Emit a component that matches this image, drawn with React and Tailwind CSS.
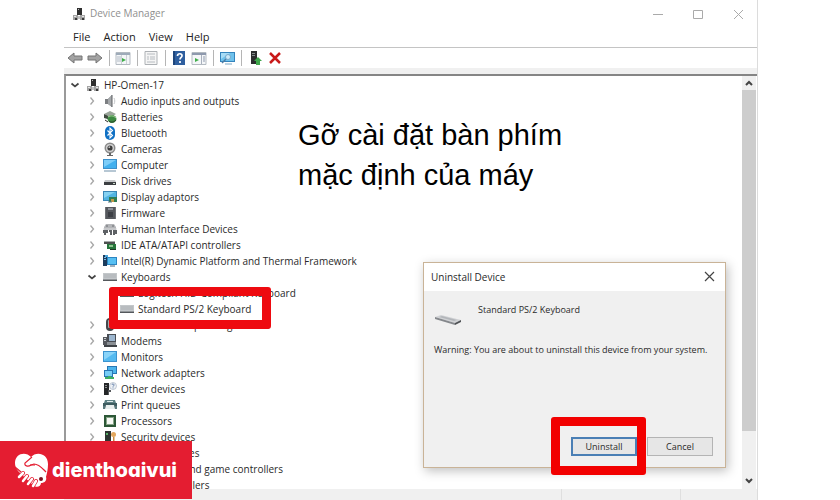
const treeItems = [
  { icon: 'root', label: 'HP-Omen-17', level: 0, open: true },
  { icon: 'audio', label: 'Audio inputs and outputs', level: 1 },
  { icon: 'battery', label: 'Batteries', level: 1 },
  { icon: 'bluetooth', label: 'Bluetooth', level: 1 },
  { icon: 'camera', label: 'Cameras', level: 1 },
  { icon: 'computer', label: 'Computer', level: 1 },
  { icon: 'disk', label: 'Disk drives', level: 1 },
  { icon: 'display', label: 'Display adaptors', level: 1 },
  { icon: 'firmware', label: 'Firmware', level: 1 },
  { icon: 'hid', label: 'Human Interface Devices', level: 1 },
  { icon: 'ide', label: 'IDE ATA/ATAPI controllers', level: 1 },
  { icon: 'intel', label: 'Intel(R) Dynamic Platform and Thermal Framework', level: 1 },
  { icon: 'keyboard', label: 'Keyboards', level: 1, open: true },
  { icon: 'keyboard', label: 'Logitech HID-Compliant Keyboard', level: 2 },
  { icon: 'keyboard', label: 'Standard PS/2 Keyboard', level: 2, marked: true },
  { icon: 'mouse', label: 'Mice and other pointing devices', level: 1 },
  { icon: 'modem', label: 'Modems', level: 1 },
  { icon: 'monitor', label: 'Monitors', level: 1 },
  { icon: 'network', label: 'Network adapters', level: 1 },
  { icon: 'other', label: 'Other devices', level: 1 },
  { icon: 'printer', label: 'Print queues', level: 1 },
  { icon: 'cpu', label: 'Processors', level: 1 },
  { icon: 'security', label: 'Security devices', level: 1 },
  { icon: 'other', label: 'Software devices', level: 1 },
  { icon: 'audio', label: 'Sound, video and game controllers', level: 1 },
  { icon: 'disk', label: 'Storage controllers', level: 1 },
];

const indents = ['pl-px', 'pl-[18px]', 'pl-[35px]'];

const glyphs = {
  root: (
    <>
      <path d="M5 1h5v7H5z" fill="#2f2f2f" />
      <path d="M6 2h1v1H6z" fill="#b8b8b8" />
      <path d="M1 8h5v5H1zM8 8h5v5H8z" fill="#a3a3a3" />
      <path d="M6 9h2v3H6z" fill="#c4c4c4" />
      <path d="M2 9h2v1H2zM10 9h2v1h-2z" fill="#e6e6e6" />
      <path d="M3 11h2v2H3zM10 11h2v2h-2z" fill="#3a3a3a" />
    </>
  ),
  audio: (
    <>
      <path d="M2 5h3l4-4v12L5 10H2z" fill="#7c7f82" />
      <path d="M5 5l4-4v12l-4-3z" fill="#a4a7aa" />
      <path d="M9 1v12" stroke="#5c5f62" />
      <path d="M11 4c1 2 1 4 0 6" fill="none" stroke="#c4c7ca" />
    </>
  ),
  battery: (
    <>
      <path d="M1 4l6-3 6 3-5 3z" fill="#9aa59a" />
      <path d="M1 4l7 3v3L1 8z" fill="#3f4a40" />
      <ellipse cx="9" cy="9" rx="4.5" ry="4" fill="#3d8a43" />
      <path d="M5 7c3-2 6-1 8 1" fill="none" stroke="#a8d49a" />
      <path d="M6 11c2 2 5 1 7-1" fill="none" stroke="#23402a" />
      <path d="M2 10l3 2" stroke="#2c2c2c" />
    </>
  ),
  bluetooth: (
    <>
      <rect x="2" y="0" width="10" height="14" rx="5" fill="#0f70c4" />
      <path d="M4.5 4.5l5 5L7 12V2l2.500 2.500-5 5" fill="none" stroke="#fff" strokeWidth="1.1" />
    </>
  ),
  camera: (
    <>
      <circle cx="7" cy="6" r="5.500" fill="#8a8a8a" />
      <circle cx="7" cy="6" r="4" fill="#d2d2d2" />
      <circle cx="7" cy="6" r="2.600" fill="#3c3c3c" />
      <circle cx="6.300" cy="5.200" r=".9" fill="#b9b9b9" />
      <path d="M6 11h2v2h2v1H4v-1h2z" fill="#666" />
    </>
  ),
  computer: (
    <>
      <path d="M0 1h14v10H0z" fill="#3d8fc9" />
      <path d="M1 2h12v8H1z" fill="#42b0ee" />
      <path d="M1 2h12L1 9z" fill="#7dcdf8" />
      <path d="M1 13h12" stroke="#6f8fa8" />
    </>
  ),
  disk: (
    <>
      <path d="M2 6h10l1 2H1z" fill="#c5c7c9" />
      <path d="M1 8h12v3H1z" fill="#3c3f42" />
      <path d="M10 9h2v1h-2z" fill="#c9d8c9" />
    </>
  ),
  display: (
    <>
      <path d="M0 1h14v10H0z" fill="#3a86b6" />
      <path d="M1 2h12v8H1z" fill="#51b4e2" />
      <path d="M1 2h11L1 8z" fill="#86d2f2" />
      <path d="M6 7h8v5H6z" fill="#2f7d55" />
      <path d="M8 9h3v3H8z" fill="#c19a46" />
      <path d="M5 12h4" stroke="#5e7a8a" />
    </>
  ),
  firmware: (
    <>
      <path d="M3 1h9v12H3z" fill="#55585d" />
      <path d="M2 1h1v12H2zM12 1h1v12h-1z" fill="#6f7276" />
      <path d="M5 2h5v2H5z" fill="#8d9199" />
      <path d="M5 6h5v5H5z" fill="#3c3f45" />
    </>
  ),
  hid: (
    <>
      <path d="M1 5l2-3h8l2 3v3H1z" fill="#b3b5b8" />
      <path d="M3 4h2M9 4h2" stroke="#6a6d70" />
      <path d="M0 8h5v3H3v2H1v-2H0zM6 8h3v5H7v-3H6zM10 8h4v4h-2v1h-2z" fill="#5e6165" />
      <path d="M0 7h14" stroke="#d8d9db" />
    </>
  ),
  ide: (
    <>
      <path d="M1 3h11v3H1z" fill="#4d5150" />
      <path d="M1 3h11v1H1z" fill="#a8abab" />
      <path d="M4 6h9v5H4z" fill="#26753b" />
      <path d="M6 7h4v2H6z" fill="#8dc48e" />
      <path d="M7 11h6v1H7z" fill="#1f3526" />
    </>
  ),
  intel: (
    <>
      <path d="M0 1h4v11H0z" fill="#1c3b5c" />
      <path d="M1 3h2v1H1zM1 5h2v1H1z" fill="#7bb8e2" />
      <path d="M4 3h10v8H4z" fill="#2b85c2" />
      <path d="M5 4h8v6H5z" fill="#57bff2" />
      <path d="M7 12h5" stroke="#42627c" />
      <path d="M2 1h3v2H2z" fill="#4aa6dc" />
    </>
  ),
  keyboard: (
    <>
      <path d="M0 3h14v7H0z" fill="#c3c7ca" />
      <path d="M1 5h12M1 7h12" stroke="#adb1b5" />
      <path d="M0 10h14v1H0z" fill="#54585c" />
      <path d="M0 9h14v1H0z" fill="#92969a" />
    </>
  ),
  mouse: (
    <>
      <rect x="3" y="0" width="8" height="13" rx="4" fill="#44474b" />
      <rect x="5" y="2" width="3" height="8" rx="1" fill="#a4a8ac" />
      <path d="M7 1v5" stroke="#222" />
    </>
  ),
  modem: (
    <>
      <path d="M4 0h9v8H4z" fill="#4a4e55" />
      <path d="M6 1h6v6H6z" fill="#9cb6cf" />
      <path d="M0 3h4v8H0z" fill="#56595e" />
      <path d="M1 4h2v1H1zM1 6h2v1H1z" fill="#c9ccd0" />
      <path d="M4 8h9v3H4z" fill="#8b9095" />
      <path d="M1 11h13v2H1z" fill="#3e4246" />
    </>
  ),
  monitor: (
    <>
      <path d="M0 1h14v11H0z" fill="#3c93cf" />
      <path d="M1 2h12v9H1z" fill="#55baf0" />
      <path d="M1 2h12L1 10z" fill="#8ad4f9" />
    </>
  ),
  network: (
    <>
      <path d="M4 0h10v8H4z" fill="#2877b4" />
      <path d="M5 1h8v6H5z" fill="#4cb4ec" />
      <path d="M1 4h9v7H1z" fill="#2877b4" />
      <path d="M2 5h7v5H2z" fill="#77cdf6" />
      <path d="M5 10h3v1h3v2H2v-2h3z" fill="#3fae63" />
    </>
  ),
  other: (
    <>
      <path d="M1 1h5v12H1z" fill="#242628" />
      <path d="M2 3h2v1H2zM2 5h2v1H2z" fill="#8d9092" />
      <path d="M5 8h3v2H6v3H5z" fill="#55585b" />
      <circle cx="10" cy="4" r="3.500" fill="#eef1f5" stroke="#a9b4c4" strokeWidth=".7" />
      <path d="M9 3c0-1.500 2.200-1.300 2 .2 0 .6-1 .7-1 1.500M10 5.500v.8" fill="none" stroke="#4e6f9e" strokeWidth=".9" />
    </>
  ),
  printer: (
    <>
      <path d="M2 2h10l1 3H1z" fill="#5e8184" />
      <path d="M4 3h6v1H4z" fill="#dfe9ea" />
      <path d="M0 5h14v3H0z" fill="#3e5c60" />
      <path d="M3 7h8l1 4H2z" fill="#e9eeee" />
      <path d="M0 8h3l-1 3H0zM11 8h3v3h-2z" fill="#5a787c" />
    </>
  ),
  cpu: (
    <>
      <path d="M1 1h12v12H1z" fill="#2c5737" />
      <path d="M3 3h8v8H3z" fill="#86a487" />
      <path d="M4 4h6v6H4z" fill="#f7f9f5" />
    </>
  ),
  security: (
    <>
      <path d="M2 1h6v12H2z" fill="#2d3431" />
      <path d="M3 3h2v2H3z" fill="#59b069" />
      <circle cx="10.500" cy="4.500" r="2.500" fill="#e2a65d" />
      <path d="M10 7h1.500v6H10z" fill="#c98c43" />
    </>
  ),
};

const toolbar = [
  'back', 'forward', '|', 'tree', '|', 'properties', '|', 'help', 'panel', '|', 'scan', '|', 'update', 'remove',
];

const toolLabels = {
  back: 'Back',
  forward: 'Forward',
  tree: 'Show console tree',
  properties: 'Properties',
  help: 'Help topics',
  panel: 'Show action pane',
  scan: 'Scan for hardware changes',
  update: 'Enable device',
  remove: 'Uninstall device',
};

const toolGlyphs = {
  back: <path d="M1 8l6-5v3h8v4H7v3z" fill="#a3a3a3" stroke="#747474" />,
  forward: <path d="M15 8L9 3v3H1v4h8v3z" fill="#a3a3a3" stroke="#747474" />,
  tree: (
    <>
      <path d="M1 2.500h14v12H1z" fill="#f4f6f8" stroke="#b3bac1" />
      <path d="M1 3h14v2H1z" fill="#9eabb9" />
      <path d="M2 7h4M2 9h4M2 11h4" stroke="#b3bcc6" />
      <path d="M6.500 5v9M11.500 5v9" stroke="#cdd2d7" />
      <path d="M7 8l4 2-4 2z" fill="#3fae49" />
    </>
  ),
  properties: (
    <>
      <path d="M2 1.500h12v13H2z" fill="#f5f5f5" stroke="#adb1b5" />
      <path d="M4 4h8M4 7h2M7 7h5M4 9h2M7 9h5M4 12h8" stroke="#b6bbc0" />
    </>
  ),
  help: (
    <>
      <path d="M2 1h12v14H2z" fill="#2f5f9f" />
      <path d="M2 1h2v14H2z" fill="#1e467c" />
      <path d="M6.500 6c0-3 5-3 4.500 0-.2 1.500-2 1.500-2 3.500M9 11v2" fill="none" stroke="#fff" strokeWidth="1.700" />
    </>
  ),
  panel: (
    <>
      <path d="M1 2.500h14v12H1z" fill="#f4f6f8" stroke="#b3bac1" />
      <path d="M1 3h14v2H1z" fill="#8e99ad" />
      <path d="M10.500 5v9" stroke="#a8b0bd" />
      <path d="M12 7h2M12 9h2M12 11h2" stroke="#8e99ad" />
      <path d="M4 8l4 2-4 2z" fill="#3fae49" />
    </>
  ),
  scan: (
    <>
      <path d="M1 2h15v10H1z" fill="#3584bd" />
      <path d="M2 3h13v8H2z" fill="#6fc2ec" />
      <path d="M2 3h9L2 9z" fill="#a7dcf6" />
      <circle cx="9" cy="7" r="2.500" fill="#cdeafa" stroke="#7aa8c9" />
      <path d="M7 9l-4 4" stroke="#4f7da4" strokeWidth="1.500" />
      <path d="M6 14h7" stroke="#7ca8c5" />
    </>
  ),
  update: (
    <>
      <path d="M4 1h6v13H4z" fill="#2b2d2e" />
      <path d="M5 3h3v1H5zM5 5h3v1H5z" fill="#858a8c" />
      <path d="M11 7l4 4h-2v4H9v-4H7z" fill="#3fa64b" />
    </>
  ),
  remove: <path d="M3 3l10 10M13 3L3 13" stroke="#c81a1a" strokeWidth="2.500" />,
};

function Glyph({ name }) {
  return (
    <svg viewBox="0 0 14 14" className="w-3.5 h-3.5 mr-1 shrink-0" aria-hidden="true">
      {glyphs[name]}
    </svg>
  );
}

function Expander({ level, open }) {
  if (level === 2) return <span className="w-4 mr-[3px] shrink-0" />;
  return (
    <svg viewBox="0 0 16 16" className="w-4 h-4 mr-[3px] shrink-0" fill="none" aria-hidden="true">
      {open ? (
        <path d="M4.500 6.500L8 9.500l3.500-3" stroke="#444" strokeWidth="1.700" />
      ) : (
        <path d="M6.500 4.500L9.500 8l-3 3.500" stroke="#a6a6a6" strokeWidth="1.300" />
      )}
    </svg>
  );
}

function TitleBar() {
  return (
    <header className="flex items-center h-7 pl-2 pr-[11px] pb-px text-[10px] text-[#8f8f8f]">
      <Glyph name="root" />
      <h1 className="flex-1">Device Manager</h1>
      <div className="flex gap-6">
        <button aria-label="Minimize">
          <svg viewBox="0 0 16 16" className="w-4 h-4"><path d="M3 8.500h10" stroke="#aaa" /></svg>
        </button>
        <button aria-label="Maximize">
          <svg viewBox="0 0 16 16" className="w-4 h-4"><path d="M3.500 4.500h9v8h-9z" fill="none" stroke="#aaa" /></svg>
        </button>
        <button aria-label="Close">
          <svg viewBox="0 0 16 16" className="w-4 h-4"><path d="M4 4l9 9M13 4l-9 9" stroke="#aaa" /></svg>
        </button>
      </div>
    </header>
  );
}

function Toolbar() {
  return (
    <div className="flex items-center h-5 pl-px">
      {toolbar.map((tool, i) =>
        tool === '|' ? (
          <span key={i} className="w-2 h-4 flex justify-center">
            <span className="w-px bg-[#b5b5b5]" />
          </span>
        ) : (
          <button key={i} aria-label={toolLabels[tool]} className="w-5 flex justify-center">
            <svg viewBox="0 0 16 16" className="w-4 h-4" fill="none">{toolGlyphs[tool]}</svg>
          </button>
        )
      )}
    </div>
  );
}

function DeviceTree() {
  return (
    <ul className="flex-1 min-w-0 pt-px overflow-hidden text-[10px] leading-4 text-[#2a2a2a]">
      {treeItems.map((item) => (
        <li key={item.label} className={`relative flex items-center h-4 whitespace-nowrap ${item.marked ? 'z-10' : ''} ${indents[item.level]}`}>
          <Expander level={item.level} open={item.open} />
          <Glyph name={item.icon} />
          <span>{item.label}</span>
          {item.marked && (
            <span className="absolute left-[43px] -top-[14px] w-[162px] h-[42px] border-[9px] border-[#ee0a10] rounded-[3px]" />
          )}
        </li>
      ))}
    </ul>
  );
}

function ScrollBar() {
  return (
    <div className="w-[14px] mr-px flex flex-col bg-[#f0f0f0]">
      <button aria-label="Scroll up" className="h-[14px] flex items-center justify-center">
        <svg viewBox="0 0 10 10" className="w-2.5 h-2.5"><path d="M2 7l3-3 3 3" fill="none" stroke="#444" strokeWidth="2" /></svg>
      </button>
      <div className="flex-1 flex flex-col">
        <div className="h-[89%] bg-[#cdcdcd]" />
      </div>
      <button aria-label="Scroll down" className="h-4 flex items-center justify-center">
        <svg viewBox="0 0 10 10" className="w-2.5 h-2.5"><path d="M2 3l3 3 3-3" fill="none" stroke="#444" strokeWidth="2" /></svg>
      </button>
    </div>
  );
}

function UninstallDialog() {
  return (
    <section
      role="dialog"
      aria-labelledby="dialog-title"
      className="absolute right-[31px] bottom-8 w-[303px] h-[206px] flex flex-col bg-[#f0f0f0] border border-[#c9b397] shadow-[2px_3px_10px_rgba(0,0,0,0.25)] text-[#2a2a2a]"
    >
      <div className="flex items-center justify-between h-7 pl-[7px] pr-2 bg-white">
        <h2 id="dialog-title" className="text-[10px]">Uninstall Device</h2>
        <button aria-label="Close dialog">
          <svg viewBox="0 0 14 14" className="w-3.5 h-3.5"><path d="M2 2l9 9M11 2l-9 9" stroke="#444" strokeWidth="1.200" /></svg>
        </button>
      </div>
      <div className="flex-1 px-2.5 pt-[11px] text-[9px] leading-4">
        <div className="flex gap-4">
          <svg viewBox="0 0 28 12" className="w-7 h-3 mt-3" aria-hidden="true">
            <path d="M1 3l6-2 20 5-6 3z" fill="#d0d2d5" />
            <path d="M5 3l3-1 15 4-3 1z" fill="#b3b6ba" />
            <path d="M1 3l20 6v2L1 5z" fill="#85888c" />
            <path d="M21 9l6-3v2l-6 3z" fill="#4f5255" />
          </svg>
          <p>Standard PS/2 Keyboard</p>
        </div>
        <p className="mt-4 whitespace-nowrap">Warning: You are about to uninstall this device from your system.</p>
      </div>
      <div className="flex justify-end gap-2.5 pr-3 pb-[11px] text-[9px]">
        <div className="relative">
          <button className="block w-[66px] h-[19px] bg-[#e6e6e6] border-2 border-[#4a7fb5] leading-none">Uninstall</button>
          <span className="absolute -left-5 -top-5 w-[95px] h-[58px] border-[9px] border-[#f20000] rounded-[3px] pointer-events-none" />
        </div>
        <button className="w-[66px] h-[19px] bg-[#e6e6e6] border border-[#b4b4b4] leading-none">Cancel</button>
      </div>
    </section>
  );
}

function Brand() {
  return (
    <div className="absolute left-0 bottom-px w-48 h-[58px] flex items-center gap-1 pl-3.5 bg-[#e41d31] text-white">
      <svg viewBox="0 0 34 36" className="w-[34px] h-9 shrink-0" fill="none" aria-hidden="true">
        <path d="M17 5C12-1 1 1 1 11c0 5 3 8 6 11l12 11c3 3 8 2 8-2 4 0 6-3 5-6 1-4 2-8 2-13C34 1 22-1 17 5z" fill="#fff" />
        <path d="M18 5l-7 6c-1 3 3 4 6 2l3-1c5 0 8 4 12 8" stroke="#e41d31" strokeWidth="1.200" />
        <path d="M1 15l6 5M16 13h5" stroke="#e41d31" strokeWidth="1.200" />
        <path d="M5 25l4-4M9 29l4-5M14 32l4-5M19 34l3-5" stroke="#e41d31" strokeWidth="4" strokeLinecap="round" />
        <path d="M5 25l4-4M9 29l4-5M14 32l4-5M19 34l3-5" stroke="#fff" strokeWidth="2.500" strokeLinecap="round" />
        <circle cx="27" cy="27" r="2" fill="#7a1420" />
      </svg>
      <span className="font-['Inter'] font-extrabold text-[20px] leading-none [font-feature-settings:'cv11']">dienthoaivui</span>
    </div>
  );
}

export default function App() {
  return (
    <div className="relative h-screen overflow-hidden bg-white font-['Open_Sans',sans-serif]">
      <main className="relative h-full ml-16 mr-[82px] flex flex-col border-r border-[#dcdcdc]">
        <TitleBar />
        <nav className="flex items-center gap-[13px] h-5 pl-[9px] pb-0.5 text-[11px] leading-none text-[#222] border-b border-[#c4c4c4]">
          <button>File</button>
          <button>Action</button>
          <button>View</button>
          <button>Help</button>
        </nav>
        <Toolbar />
        <div className="h-1.5 bg-[#f0f0f0]" />
        <div className="flex-1 min-h-0 flex border-l-2 border-t-2 border-l-[#9a9a9a] border-t-[#858585]">
          <DeviceTree />
          <ScrollBar />
        </div>
        <footer className="h-[11px] flex justify-end bg-[#f0f0f0]">
          <span className="w-[119px] border-l border-[#dfdfdf]" />
          <span className="w-[77px] border-l border-[#dfdfdf]" />
        </footer>
        <p className="absolute left-[234px] top-[115px] font-['Liberation_Sans',sans-serif] text-[29px] leading-10 text-black">
          Gỡ cài đặt bàn phím
          <br />
          mặc định của máy
        </p>
        <UninstallDialog />
      </main>
      <Brand />
    </div>
  );
}
